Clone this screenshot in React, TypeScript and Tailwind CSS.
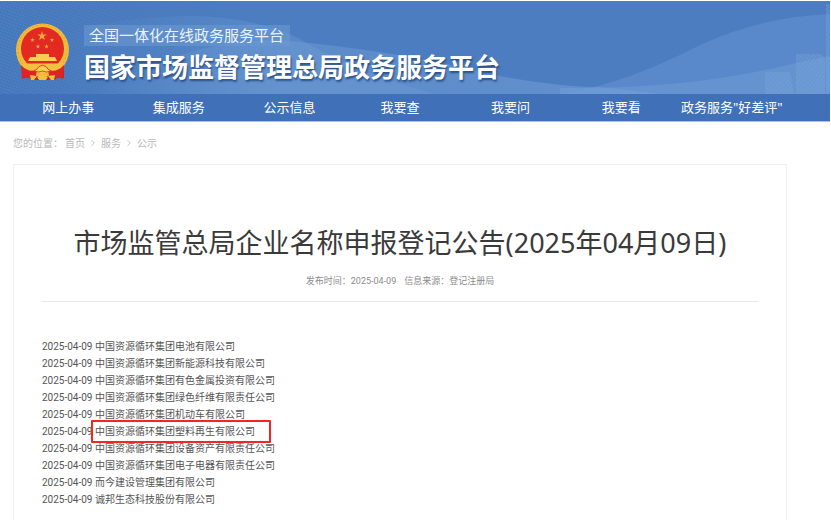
import { Fragment } from 'react';
import { ChevronRight } from 'lucide-react';

const navItems = ['网上办事', '集成服务', '公示信息', '我要查', '我要问', '我要看', '政务服务"好差评"'];

const crumbs = ['首页', '服务', '公示'];

interface Company {
    date: string;
    name: string;
    marked?: boolean;
}

const companies: Company[] = [
    { date: '2025-04-09', name: '中国资源循环集团电池有限公司' },
    { date: '2025-04-09', name: '中国资源循环集团新能源科技有限公司' },
    { date: '2025-04-09', name: '中国资源循环集团有色金属投资有限公司' },
    { date: '2025-04-09', name: '中国资源循环集团绿色纤维有限责任公司' },
    { date: '2025-04-09', name: '中国资源循环集团机动车有限公司' },
    { date: '2025-04-09', name: '中国资源循环集团塑料再生有限公司', marked: true },
    { date: '2025-04-09', name: '中国资源循环集团设备资产有限责任公司' },
    { date: '2025-04-09', name: '中国资源循环集团电子电器有限责任公司' },
    { date: '2025-04-09', name: '而今建设管理集团有限公司' },
    { date: '2025-04-09', name: '诚邦生态科技股份有限公司' },
];

const STAR = 'M0 -1 L0.225 -0.309 L0.951 -0.309 L0.363 0.118 L0.588 0.809 L0 0.382 L-0.588 0.809 L-0.363 0.118 L-0.951 -0.309 L-0.225 -0.309 Z';

function Emblem() {
    return (
        <svg viewBox="0 0 56 58" className="h-[58px] w-[56px] shrink-0" aria-label="国徽" role="img">
            <path d="M7 38 L7 55 Q13 53 17 57 L39 57 Q43 53 49 55 L49 38 Z" fill="#c81f22" />
            <ellipse cx="27.5" cy="27" rx="26.5" ry="26.5" fill="#f2bb3b" />
            <circle cx="27.5" cy="26.5" r="24.500" fill="none" stroke="#e0a22c" strokeWidth="1" strokeDasharray="2 2" />
            <circle cx="27.5" cy="25.5" r="21.500" fill="#e22a20" />
            <path d={STAR} transform="translate(27 13) scale(5)" fill="#f2a93a" />
            <path d={STAR} transform="translate(17.5 17) scale(2.4)" fill="#f2a93a" />
            <path d={STAR} transform="translate(37 17) scale(2.4)" fill="#f2a93a" />
            <path d={STAR} transform="translate(23 23.5) scale(2.4)" fill="#f2a93a" />
            <path d={STAR} transform="translate(31.5 23.5) scale(2.4)" fill="#f2a93a" />
            <path d="M21 31 H34 V34 H40 L42 38 H13 L15 34 H21 Z" fill="#f8cf50" />
            <path d="M7 40.500 H48 Q42 51 27.500 51 Q13 51 7 40.500 Z" fill="#f4c040" />
            <path d="M6 42 Q13 50 22 47 L20 57 Q13 53 7 56 Z" fill="#dc2326" />
            <path d="M49 42 Q42 50 33 47 L35 57 Q42 53 48 56 Z" fill="#dc2326" />
            <path d="M19 48 Q23 46 24 43.500 Q27.500 41 31 43.500 Q32 46 36 48 Q31 50 27.500 48 Q24 50 19 48 Z" fill="#f8cf50" stroke="#dc2326" strokeWidth="0.8" />
            <path d="M15 52 L22 53 L19 57 H16 Z M40 52 L33 53 L36 57 H39 Z M22 54 Q27.500 49 33 54 L31 57 H24 Z" fill="#f4c040" />
        </svg>
    );
}

function BannerArt() {
    return (
        <svg
            viewBox="0 0 830 93"
            preserveAspectRatio="none"
            className="absolute inset-0 h-full w-full"
            aria-hidden="true"
        >
            <defs>
                <pattern id="mesh" width="3" height="3" patternUnits="userSpaceOnUse" patternTransform="rotate(20)">
                    <circle cx="1.5" cy="1.5" r="0.8" fill="#2f5fa6" />
                </pattern>
                <pattern id="windows" width="3" height="3" patternUnits="userSpaceOnUse" patternTransform="rotate(35)">
                    <rect width="1.5" height="1.5" fill="#8bb2de" />
                </pattern>
                <linearGradient id="meshFade" x1="0" x2="1" y1="0" y2="0">
                    <stop offset="0" stopColor="#fff" stopOpacity="0.5" />
                    <stop offset="1" stopColor="#fff" stopOpacity="0" />
                </linearGradient>
                <mask id="meshMask">
                    <rect width="240" height="93" fill="url(#meshFade)" />
                </mask>
                <linearGradient id="haze" x1="0" x2="1" y1="0" y2="0">
                    <stop offset="0" stopColor="#6c9ad2" stopOpacity="0" />
                    <stop offset="0.6" stopColor="#6c9ad2" stopOpacity="0.4" />
                    <stop offset="1" stopColor="#6c9ad2" stopOpacity="0.3" />
                </linearGradient>
                <linearGradient id="wave" x1="0" x2="1" y1="0" y2="0">
                    <stop offset="0" stopColor="#78a4da" stopOpacity="0" />
                    <stop offset="0.3" stopColor="#78a4da" stopOpacity="0.35" />
                    <stop offset="1" stopColor="#78a4da" stopOpacity="0.5" />
                </linearGradient>
            </defs>
            <rect width="240" height="93" fill="url(#mesh)" mask="url(#meshMask)" />
            <path d="M60 30 Q140 14 200 15 Q260 18 300 38 Q350 70 435 93 H60 Z" fill="url(#haze)" />
            <path d="M90 93 Q180 40 280 39 Q400 50 500 75 Q560 86 600 86 L660 93 Z" fill="url(#wave)" />
            <path d="M590 87 Q640 75 700 44 Q760 16 830 13 V93 H560 Z" fill="#6a9ad6" opacity="0.45" />
            <path d="M560 87 Q680 88 770 68 Q805 60 830 55 V93 H560 Z" fill="#78a5dc" opacity="0.35" />
            <path d="M765 71 H790 L794 93 H765 Z M796 53 H820 Q825 55 825 60 V93 H796 Z M826 3 H830 V93 H826 Z" fill="#7fabde" opacity="0.2" />
            <path d="M765 71 H790 L794 93 H765 Z M796 53 H820 Q825 55 825 60 V93 H796 Z M826 3 H830 V93 H826 Z" fill="url(#windows)" opacity="0.35" />
        </svg>
    );
}

function Header() {
    return (
        <header className="mr-px mt-px border-b border-[#a9bfe2] text-white">
            <div className="relative bg-[#4b7dc0]">
                <BannerArt />
                <div className="relative flex items-start gap-[13px] pb-[10px] pl-[15px] pt-[22px]">
                    <Emblem />
                    <div className="pt-0.5">
                        <p className="w-fit bg-[#6a97d0]/60 pl-[5px] pr-1.5 text-[15px] leading-[21px] text-[#eaf2fc]">
                            全国一体化在线政务服务平台
                        </p>
                        <h1 className="pt-1 text-[26px] font-bold leading-[34px] [text-shadow:1px_2px_2px_#2c4f86]">
                            国家市场监督管理总局政务服务平台
                        </h1>
                    </div>
                </div>
            </div>
            <nav className="bg-[#4070b8] pl-[13px] pr-[43px]">
                <ul className="grid grid-cols-7">
                    {navItems.map(item => (
                        <li key={item} className="text-center text-[13px] leading-[27px]">
                            <a href="#" className="whitespace-nowrap">{item}</a>
                        </li>
                    ))}
                </ul>
            </nav>
        </header>
    );
}

function Breadcrumb() {
    return (
        <nav aria-label="您的位置" className="flex items-center pt-[11px] text-[10px] leading-5 text-[#b9b9b9]">
            <span>您的位置：</span>
            {crumbs.map((crumb, i) => (
                <Fragment key={crumb}>
                    {i > 0 && <ChevronRight size={10} strokeWidth={2} className="mx-[3px]" />}
                    <a href="#" className={i === 0 ? 'ml-0.5' : ''}>{crumb}</a>
                </Fragment>
            ))}
        </nav>
    );
}

export default function App() {
    return (
        <div className="bg-white font-['Noto_Sans','Noto_Sans_CJK_SC',sans-serif]">
            <Header />
            <main className="pl-[13px] pr-[44px]">
                <Breadcrumb />
                <article className="mt-[11px] border border-b-0 border-[#f0f0f0] px-7 pb-3 pt-[58px]">
                    <h2 className="text-center text-[27px] leading-10 text-[#3a3a3a]">
                        市场监管总局企业名称申报登记公告(2025年04月09日)
                    </h2>
                    <p className="flex justify-center gap-2 border-b border-[#e8e8e8] pb-3 pt-[10px] font-['Roboto','Noto_Sans_CJK_SC',sans-serif] text-[9px] leading-4 text-[#8c8c8c]">
                        <span>发布时间：2025-04-09</span>
                        <span>信息来源：登记注册局</span>
                    </p>
                    <ul className="pt-9 font-['Roboto','Noto_Sans_CJK_SC',sans-serif] text-[10px] leading-[17px] text-[#555555]">
                        {companies.map(({ date, name, marked }) => (
                            <li key={name}>
                                {date}{' '}
                                <span className="relative">
                                    {name}
                                    {marked && (
                                        <span className="absolute -bottom-1.5 -left-1 -right-4 -top-1.5 rounded-[1px] border-2 border-[#f0281e]" />
                                    )}
                                </span>
                            </li>
                        ))}
                    </ul>
                </article>
            </main>
        </div>
    );
}
